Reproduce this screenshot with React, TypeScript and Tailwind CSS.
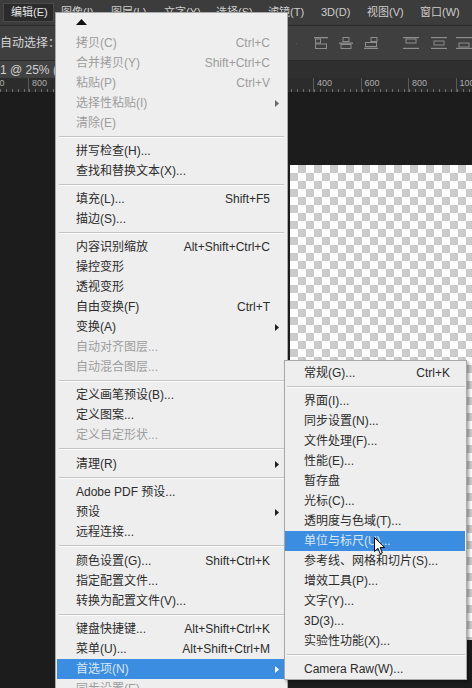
import React from 'react';

type Item = { t: string; k?: string; d?: boolean; a?: boolean; h?: boolean };
type Row = Item | { sep: 8 | 9 };

const MAIN: Row[] = [
  { t: '拷贝(C)', k: 'Ctrl+C', d: true },
  { t: '合并拷贝(Y)', k: 'Shift+Ctrl+C', d: true },
  { t: '粘贴(P)', k: 'Ctrl+V', d: true },
  { t: '选择性粘贴(I)', d: true, a: true },
  { t: '清除(E)', d: true },
  { sep: 8 },
  { t: '拼写检查(H)...' },
  { t: '查找和替换文本(X)...' },
  { sep: 8 },
  { t: '填充(L)...', k: 'Shift+F5' },
  { t: '描边(S)...' },
  { sep: 8 },
  { t: '内容识别缩放', k: 'Alt+Shift+Ctrl+C' },
  { t: '操控变形' },
  { t: '透视变形' },
  { t: '自由变换(F)', k: 'Ctrl+T' },
  { t: '变换(A)', a: true },
  { t: '自动对齐图层...', d: true },
  { t: '自动混合图层...', d: true },
  { sep: 8 },
  { t: '定义画笔预设(B)...' },
  { t: '定义图案...' },
  { t: '定义自定形状...', d: true },
  { sep: 9 },
  { t: '清理(R)', a: true },
  { sep: 8 },
  { t: 'Adobe PDF 预设...' },
  { t: '预设', a: true },
  { t: '远程连接...' },
  { sep: 9 },
  { t: '颜色设置(G)...', k: 'Shift+Ctrl+K' },
  { t: '指定配置文件...' },
  { t: '转换为配置文件(V)...' },
  { sep: 8 },
  { t: '键盘快捷键...', k: 'Alt+Shift+Ctrl+K' },
  { t: '菜单(U)...', k: 'Alt+Shift+Ctrl+M' },
  { t: '首选项(N)', a: true, h: true },
  { t: '同步设置(E)', d: true },
];

const SUB: Row[] = [
  { t: '常规(G)...', k: 'Ctrl+K' },
  { sep: 8 },
  { t: '界面(I)...' },
  { t: '同步设置(N)...' },
  { t: '文件处理(F)...' },
  { t: '性能(E)...' },
  { t: '暂存盘' },
  { t: '光标(C)...' },
  { t: '透明度与色域(T)...' },
  { t: '单位与标尺(U)...', h: true },
  { t: '参考线、网格和切片(S)...' },
  { t: '增效工具(P)...' },
  { t: '文字(Y)...' },
  { t: '3D(3)...' },
  { t: '实验性功能(X)...' },
  { sep: 8 },
  { t: 'Camera Raw(W)...' },
];

function Tri({ color }: { color: string }) {
  return (
    <svg width="4" height="7" viewBox="0 0 4 7">
      <path d="M0 0L4 3.5L0 7Z" fill={color} />
    </svg>
  );
}

function Sep({ s }: { s: 8 | 9 }) {
  return (
    <div className={s === 8 ? 'h-[8px] pt-[3px] pl-[2px]' : 'h-[9px] pt-[3px] pl-[2px]'}>
      <div className="h-px bg-[#c3c3c3]" />
      <div className="h-px bg-[#fbfbfb]" />
    </div>
  );
}

function MenuRow({ r, sub }: { r: Item; sub?: boolean }) {
  const color = r.h ? 'text-[#d9e7f8]' : r.d ? 'text-[#9d9d9d]' : 'text-[#2c2c2c]';
  const bg = r.h ? 'bg-[#3b8de1]' : '';
  const pad = sub ? 'pl-[19px] pr-[6px]' : 'pl-[19px] pr-[5px]';
  const arrowColor = r.h ? '#ffffff' : r.d ? '#6a6a6a' : '#1e1e1e';
  return (
    <div className={`flex h-[20px] items-center whitespace-nowrap ${bg} ${color} ${pad}`}>
      <span>{r.t}</span>
      <span className="ml-auto">{r.k}</span>
      <span className="ml-[5px] flex w-[4px] justify-end">{r.a ? <Tri color={arrowColor} /> : null}</span>
    </div>
  );
}

function Rows({ rows, sub }: { rows: Row[]; sub?: boolean }) {
  return (
    <>
      {rows.map((r, i) =>
        'sep' in r ? <Sep key={i} s={r.sep} /> : <MenuRow key={i} r={r} sub={sub} />
      )}
    </>
  );
}

const BAR_ITEMS: { t: string; w: string }[] = [
  { t: '图像(I)', w: 'w-[50px]' },
  { t: '图层(L)', w: 'w-[53px]' },
  { t: '文字(Y)', w: 'w-[52px]' },
  { t: '选择(S)', w: 'w-[52px]' },
  { t: '滤镜(T)', w: 'w-[53px]' },
  { t: '3D(D)', w: 'w-[46px]' },
  { t: '视图(V)', w: 'w-[53px]' },
  { t: '窗口(W)', w: 'w-[52px]' },
];

const RULER = ['1000', '800', '', '', '', '', '', '400', '600', '800', '100'];

function AlignIcon({ kind }: { kind: number }) {
  const c = '#8e8e8e';
  const c2 = '#6e6e6e';
  if (kind === 0)
    return (
      <svg width="12" height="11" viewBox="0 0 12 11">
        <rect x="0" y="0" width="1.5" height="11" fill={c} />
        <rect x="3" y="2" width="3.5" height="7" fill={c2} />
        <rect x="7" y="3" width="4.5" height="5" fill={c} />
      </svg>
    );
  if (kind === 1)
    return (
      <svg width="14" height="12" viewBox="0 0 14 12">
        <rect x="0" y="0" width="14" height="1.3" fill={c} />
        <rect x="1.5" y="2" width="5" height="4" fill="none" stroke={c} strokeWidth="1" />
        <rect x="1.5" y="7" width="11" height="4.5" fill="none" stroke={c} strokeWidth="1" />
      </svg>
    );
  if (kind === 2)
    return (
      <svg width="14" height="12" viewBox="0 0 14 12">
        <rect x="4" y="0.5" width="6" height="4" fill="none" stroke={c} strokeWidth="1" />
        <rect x="0" y="5.5" width="14" height="1.3" fill={c} />
        <rect x="2" y="7.5" width="10" height="4" fill="none" stroke={c} strokeWidth="1" />
      </svg>
    );
  if (kind === 3)
    return (
      <svg width="14" height="12" viewBox="0 0 14 12">
        <rect x="7" y="0.5" width="6" height="4" fill="none" stroke={c} strokeWidth="1" />
        <rect x="1.5" y="5.5" width="11" height="4" fill="none" stroke={c} strokeWidth="1" />
        <rect x="0" y="10.7" width="14" height="1.3" fill={c} />
      </svg>
    );
  const y = kind === 4 ? 2 : kind === 5 ? 4 : 6;
  return (
    <svg width="16" height="12" viewBox="0 0 16 12">
      <rect x="0" y="0" width="16" height="1.2" fill={c} />
      <rect x="3" y={y} width="10" height="4" fill="none" stroke={c} strokeWidth="1" />
      <rect x="0" y="10.8" width="16" height="1.2" fill={c} />
    </svg>
  );
}

function Cursor() {
  return (
    <svg width="12" height="18" viewBox="0 0 12 18">
      <path
        d="M0.5 0.5 L0.5 14.5 L3.9 11.3 L6.2 16.8 L8.4 15.9 L6.1 10.6 L10.8 10.6 Z"
        fill="#ffffff"
        stroke="#000000"
        strokeWidth="1"
        strokeLinejoin="round"
      />
    </svg>
  );
}

export default function App() {
  return (
    <div className="relative flex h-[688px] w-[472px] flex-col overflow-hidden bg-[#1c1c1c] font-['Liberation_Sans','Noto_Sans_CJK_SC',sans-serif] text-[12px]">
      {/* Menu bar */}
      <div className="flex h-[25px] shrink-0 items-center bg-[#3c3c3c] text-[11px] text-[#cdcdcd]">
        <div className="ml-[3px] flex h-[19px] w-[52px] items-center border border-[#4a4a4a] bg-[#2b2b2b] pl-[7px] text-[#e6e6e6]">
          编辑(E)
        </div>
        <div className="flex pl-[7px]">
          {BAR_ITEMS.map((b) => (
            <div key={b.t} className={`${b.w} whitespace-nowrap`}>
              {b.t}
            </div>
          ))}
        </div>
      </div>

      {/* Options bar */}
      <div className="flex h-[35px] shrink-0 items-center border-t border-[#2a2a2a] bg-[#3f3f3f]">
        <div className="w-[296px] shrink-0 whitespace-nowrap text-[12px] text-[#d6d6d6]">自动选择：</div>
        <AlignIcon kind={0} />
        <div className="ml-[17px]">
          <AlignIcon kind={1} />
        </div>
        <div className="ml-[11px]">
          <AlignIcon kind={2} />
        </div>
        <div className="ml-[11px]">
          <AlignIcon kind={3} />
        </div>
        <div className="ml-[25px]">
          <AlignIcon kind={4} />
        </div>
        <div className="ml-[12px]">
          <AlignIcon kind={5} />
        </div>
        <div className="ml-[9px]">
          <AlignIcon kind={6} />
        </div>
      </div>

      {/* Tab bar */}
      <div className="flex h-[18px] shrink-0 border-t border-[#2a2a2a] bg-[#2f2f2f]">
        <div className="flex w-[240px] items-center bg-[#424242] text-[12px] text-[#d0d0d0]">1 @ 25% (</div>
      </div>

      {/* Ruler */}
      <div className="flex h-[14px] shrink-0 overflow-hidden bg-[#2c2c2c]">
        <div className="ml-[-19.5px] flex">
          {RULER.map((n, i) => (
            <div key={i} className="flex w-[47.5px] shrink-0 flex-col border-l border-[#5a5a5a]">
              <div className="h-[11px] pl-[3px] text-[9px] leading-[11px] text-[#adadad]">{n}</div>
              <div className="mt-auto h-[3px] bg-[image:repeating-linear-gradient(90deg,#6c6c6c_0_1px,transparent_1px_6px)]" />
            </div>
          ))}
        </div>
      </div>

      {/* Canvas */}
      <div className="flex-1 bg-[#1c1c1c] pl-[290px] pt-[73px]">
        <div className="h-[475px] bg-[image:conic-gradient(#cbcbcb_25%,#ffffff_0_50%,#cbcbcb_0_75%,#ffffff_0)] bg-[length:16px_16px] bg-size-[16px_16px]" />
      </div>

      {/* Edit menu */}
      <div className="absolute left-[55px] top-[12px] w-[233px] border border-[#a8a8a8] bg-[#eeeeee] pl-[1px] pr-[3px]">
        <div className="h-[20px] pl-[19px] pt-[6px]">
          <svg width="11" height="6" viewBox="0 0 11 6">
            <path d="M0 6L5.5 0L11 6Z" fill="#111111" />
          </svg>
        </div>
        <Rows rows={MAIN} />
      </div>

      {/* Preferences submenu */}
      <div className="absolute left-[284px] top-[360px] w-[183px] border border-[#a8a8a8] bg-[#eeeeee] pr-[1px] pt-[2px] shadow-[2px_2px_3px_rgba(0,0,0,0.35)]">
        <Rows rows={SUB} sub />
      </div>

      {/* Mouse cursor */}
      <div className="absolute left-[374px] top-[537px]">
        <Cursor />
      </div>
    </div>
  );
}
